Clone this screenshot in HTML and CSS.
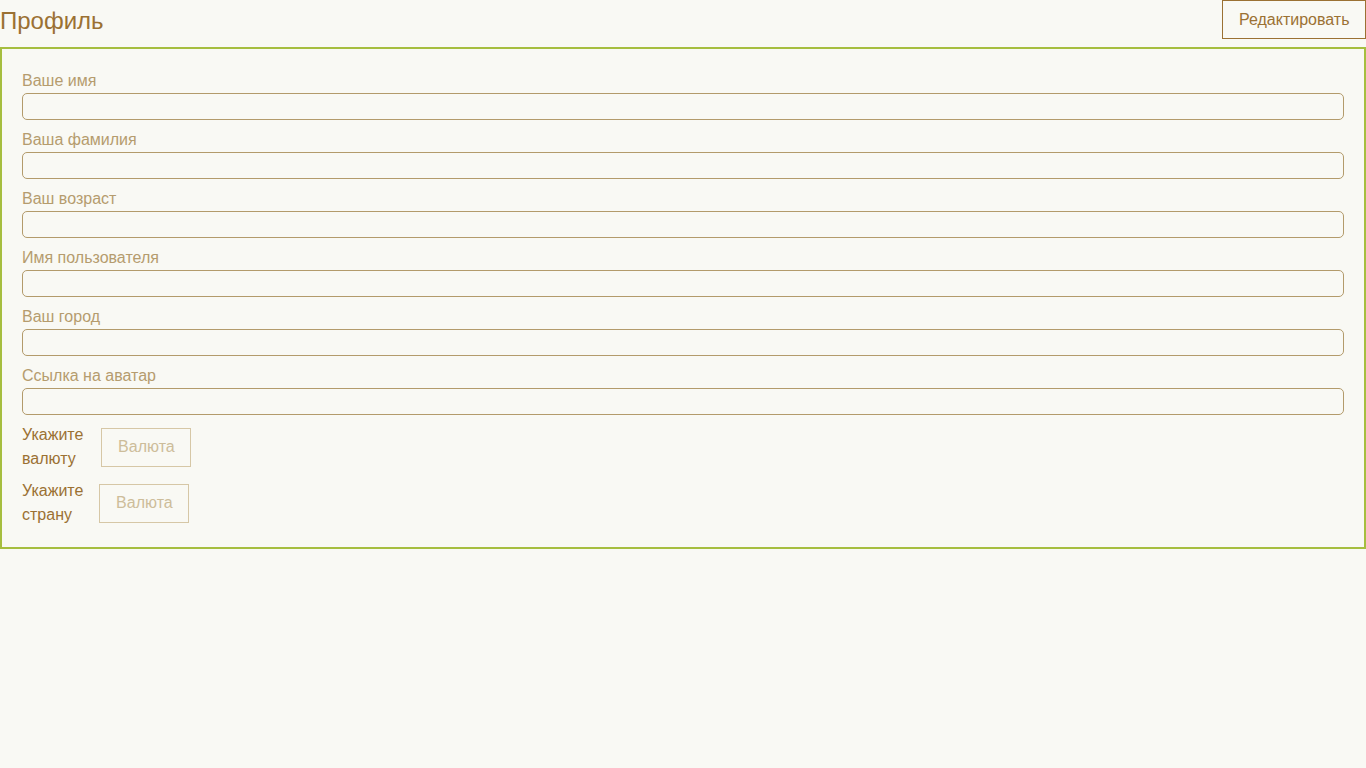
FILE: index.html
```html
<!DOCTYPE html>
<html lang="ru">
<head>
<meta charset="utf-8">
<title>Профиль</title>
<link rel="stylesheet" href="styles.css">
</head>
<body>
<div class="page">
  <header class="header">
    <h1 class="title">Профиль</h1>
    <button class="edit-btn" type="button">Редактировать</button>
  </header>
  <section class="card">
    <div class="field">
      <label class="field-label">Ваше имя</label>
      <input class="field-input" type="text" readonly>
    </div>
    <div class="field">
      <label class="field-label">Ваша фамилия</label>
      <input class="field-input" type="text" readonly>
    </div>
    <div class="field">
      <label class="field-label">Ваш возраст</label>
      <input class="field-input" type="text" readonly>
    </div>
    <div class="field">
      <label class="field-label">Имя пользователя</label>
      <input class="field-input" type="text" readonly>
    </div>
    <div class="field">
      <label class="field-label">Ваш город</label>
      <input class="field-input" type="text" readonly>
    </div>
    <div class="field">
      <label class="field-label">Ссылка на аватар</label>
      <input class="field-input" type="text" readonly>
    </div>
    <div class="select-row select-row--currency">
      <span class="select-label">Укажите валюту</span>
      <button class="select-btn" type="button" disabled>Валюта</button>
    </div>
    <div class="select-row">
      <span class="select-label">Укажите страну</span>
      <button class="select-btn" type="button" disabled>Валюта</button>
    </div>
  </section>
</div>
</body>
</html>
```

FILE: styles.css
```css
* { box-sizing: border-box; }

html, body {
  margin: 0;
  padding: 0;
  background: #f9f9f4;
}

body {
  font-family: "Liberation Sans", Arial, sans-serif;
  font-size: 16px;
  color: #9b7133;
}

.page {
  display: flex;
  flex-direction: column;
  gap: 8px;
}

.header {
  display: flex;
  justify-content: space-between;
  align-items: center;
  height: 39px;
}

.title {
  margin: 0;
  padding-top: 2px;
  font-size: 24px;
  font-weight: normal;
  color: #9b7133;
  line-height: 28px;
}

.edit-btn {
  font-family: inherit;
  font-size: 16px;
  line-height: 18px;
  color: #9b7133;
  background: transparent;
  border: 1px solid #9b7133;
  padding: 10px 16px 9px;
  height: 39px;
  width: 144px;
  cursor: pointer;
}

.card {
  border: 2px solid #a6be3f;
  padding: 20px;
  display: flex;
  flex-direction: column;
  gap: 8px;
}

.field {
  display: flex;
  flex-direction: column;
}

.field-label {
  display: block;
  line-height: 24px;
  color: #b59c6e;
}

.field-input {
  height: 27px;
  width: 100%;
  border: 1px solid #b39b6b;
  border-radius: 5px;
  background: transparent;
  padding: 0 8px;
  font-family: inherit;
  font-size: 16px;
  outline: none;
}

.select-row {
  display: flex;
  align-items: center;
  gap: 16px;
}

.select-row--currency {
  gap: 18px;
}

.select-label {
  width: min-content;
  line-height: 24px;
  color: #9b7133;
}

.select-btn {
  font-family: inherit;
  font-size: 16px;
  line-height: 18px;
  width: 90px;
  height: 39px;
  border: 1px solid #d6c7a6;
  background: transparent;
  color: #cdbd9a;
  padding: 0;
}
```
